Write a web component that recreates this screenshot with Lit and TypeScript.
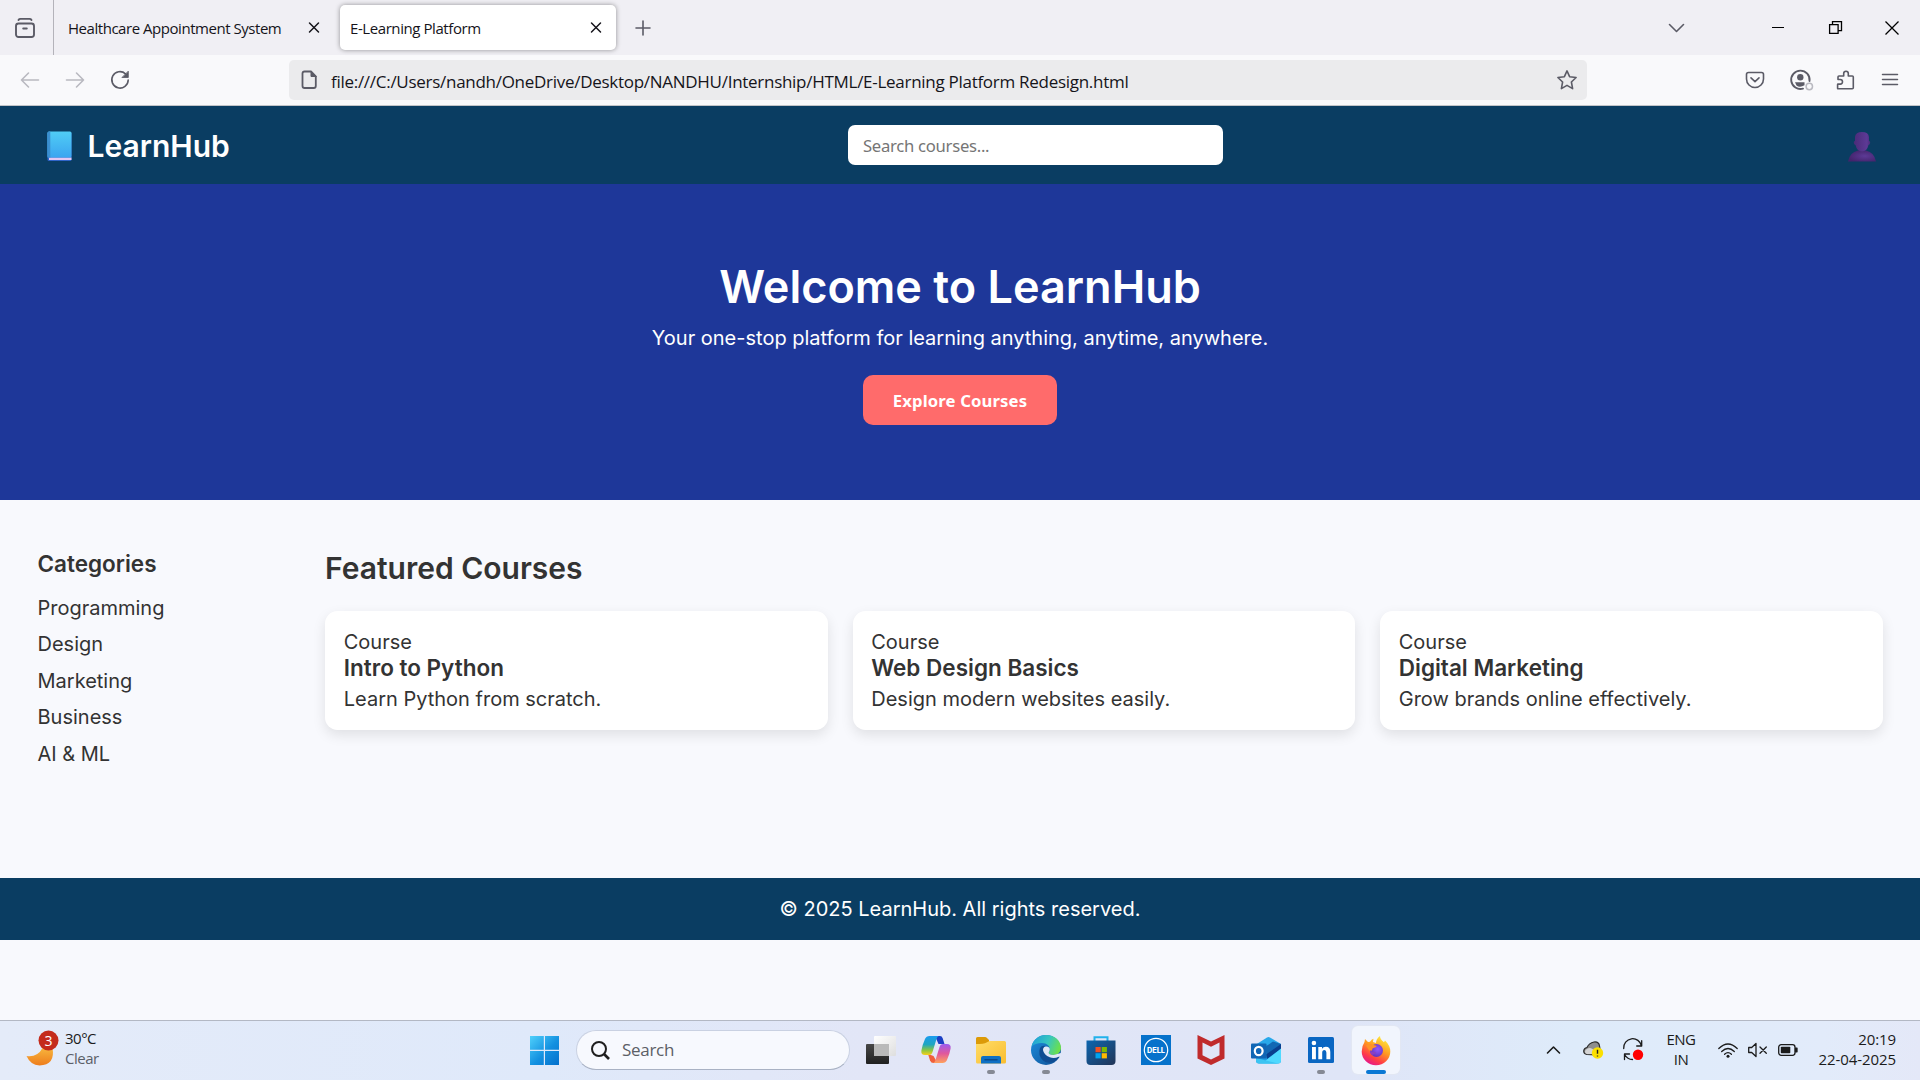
import { LitElement, html, css, svg } from "lit";
import { customElement } from "lit/decorators.js";

/* ---------- Browser chrome ---------- */
@customElement("browser-chrome")
class BrowserChrome extends LitElement {
  static styles = css`
    :host { display: block; font-family: "Open Sans", "Noto Sans", sans-serif; color: #15141a; }
    svg { display: block; fill: none; stroke: #5b5b66; stroke-width: 1.6; stroke-linecap: round; stroke-linejoin: round; flex: none; overflow: visible; }
    .tabs { height: 55px; background: #f0eff4; display: flex; align-items: center; box-sizing: border-box; }
    .view { width: 54px; height: 55px; border-right: 1px solid #b4b3ba; box-sizing: border-box; display: flex; align-items: center; padding-left: 15px; }
    .tab { display: flex; align-items: center; justify-content: space-between; box-sizing: border-box; height: 45px; font-size: 15px; white-space: nowrap; }
    .tab svg { stroke: #15141a; stroke-width: 1.5; }
    .idle { width: 285px; padding: 0 20px 0 14px; }
    .idle span { letter-spacing: -0.46px; }
    .active { width: 276px; margin-left: 1px; padding: 0 15px 0 10px; background: #fff; border-radius: 5px; box-shadow: 0 0 5px rgba(0, 0, 0, 0.4); }
    .active span { letter-spacing: -0.42px; }
    .plus { margin-left: 20px; }
    .controls { margin-left: auto; display: flex; align-items: center; padding-right: 21px; }
    .chevron { margin-right: 88px; }
    .minimize { margin-right: 45px; }
    .restore { margin-right: 43px; }
    .dark { stroke: #000; stroke-width: 1.3; stroke-linecap: butt; stroke-linejoin: miter; }
    .bar { height: 51px; background: #f9f9fb; border-bottom: 1px solid #c2c4c8; box-sizing: border-box; display: flex; align-items: center; }
    .nav { width: 289px; box-sizing: border-box; padding-left: 20px; display: flex; gap: 25px; }
    .faint { stroke: #b9b9c0; }
    .url { width: 1298px; height: 40px; border-radius: 5px; background: #ebebed; display: flex; align-items: center; box-sizing: border-box; padding: 0 10px 0 11px; }
    .address { flex: 1; margin-left: 13px; font-size: 17px; letter-spacing: -0.28px; white-space: nowrap; padding-top: 3px; }
    .tools { display: flex; align-items: center; gap: 24.500px; margin-left: 158px; }
  `;
  render() {
    const x = html`<svg width="10" height="10" viewBox="0 0 10 10"><path d="M.5 0l9 9M9.500 0l-9 9" /></svg>`;
    return html`
      <div class="tabs">
        <div class="view">
          <svg width="20" height="20" viewBox="0 0 20 20"><rect x="1" y="5.500" width="18" height="13.500" rx="2.500" stroke-width="1.900" /><path d="M3.500 1.900q.6-1 2-1h9q1.400 0 2 1M8.200 10.500h3.600" stroke-width="1.900" /></svg>
        </div>
        <div class="tab idle"><span>Healthcare Appointment System</span>${x}</div>
        <div class="tab active"><span>E-Learning Platform</span>${x}</div>
        <svg class="plus" width="14" height="14" viewBox="0 0 14 14"><path d="M7 0v14M0 7h14" /></svg>
        <div class="controls">
          <svg class="chevron" width="15" height="8" viewBox="0 0 15 8"><path d="M.5 .5l7 7 7-7" /></svg>
          <svg class="dark minimize" width="12" height="2" viewBox="0 0 12 2"><path d="M0 .5h12" stroke-width="1" /></svg>
          <svg class="dark restore" width="13" height="13" viewBox="0 0 13 13"><path d="M.6 3.600h8.500v8.800H.6zM3.500 3.500V.6h9v9H9.500" /></svg>
          <svg class="dark" width="14" height="14" viewBox="0 0 14 14"><path d="M.5 .5l13 13M13.500 .5l-13 13" /></svg>
        </div>
      </div>
      <div class="bar">
        <div class="nav">
          <svg class="faint" width="20" height="20" viewBox="0 0 20 20"><path d="M1.500 10h17M8.500 3l-7 7 7 7" /></svg>
          <svg class="faint" width="20" height="20" viewBox="0 0 20 20"><path d="M18.500 10h-17M11.500 3l7 7-7 7" /></svg>
          <svg width="20" height="20" viewBox="0 0 20 20"><path d="M15.500 3.800A8.200 8.200 0 1 0 18.200 10" /><path d="M18.300 1.500v6h-6z" fill="#5b5b66" stroke-width=".8" /></svg>
        </div>
        <div class="url">
          <svg width="18" height="20" viewBox="0 0 18 20"><path d="M4.500 1.500H11l4.800 4.800V16q0 2-2 2H4.500q-2 0-2-2V3.500q0-2 2-2z" stroke-width="1.800" /><path d="M11 1.500v5h5z" fill="#5b5b66" stroke-width="1" /></svg>
          <span class="address">file:///C:/Users/nandh/OneDrive/Desktop/NANDHU/Internship/HTML/E-Learning Platform Redesign.html</span>
          <svg width="20" height="20" viewBox="0 0 20 20"><path d="M10 .9l2.600 5.800 6.500.8-4.700 4.500 1.200 6.600L10 15.400l-5.600 3.200 1.200-6.600L.9 7.500l6.500-.8z" /></svg>
        </div>
        <div class="tools">
          <svg width="20" height="20" viewBox="0 0 20 20"><path d="M3.500 2.500h13q2 0 2 2V9a8.500 8.500 0 0 1-17 0V4.500q0-2 2-2zM6 7.800l4 3.800 4-3.800" /></svg>
          <svg width="21" height="22" viewBox="0 0 21 22"><path d="M13 19.600A9.200 9.200 0 1 1 19.500 12" stroke-width="1.900" /><circle cx="10.300" cy="8.200" r="3.200" fill="#5b5b66" stroke="none" /><path d="M5 13.200h9.500v3q-4.500 2.800-8 .3z" fill="#5b5b66" stroke="none" /><circle cx="19.300" cy="17.500" r="3.200" stroke="#b9b9c0" stroke-width="1.500" /></svg>
          <svg width="20" height="20" viewBox="0 0 20 20"><path d="M3 18.800h14.300q1 0 1-1V7q0-1-1-1h-4V3.500a2.300 2.300 0 0 0-4.600 0V6H4Q3 6 3 7v2.500h2.200a2.300 2.300 0 0 1 0 4.600H3q-.4 0-.4.400v4z" /></svg>
          <svg width="20" height="20" viewBox="0 0 20 20"><path d="M2.500 4.500h15M2.500 9.500h15M2.500 14.500h15" stroke-width="1.500" /></svg>
        </div>
      </div>
    `;
  }
}

/* ---------- Learning site ---------- */
const categories = ["Programming", "Design", "Marketing", "Business", "AI & ML"];
const courses = [
  ["Intro to Python", "Learn Python from scratch."],
  ["Web Design Basics", "Design modern websites easily."],
  ["Digital Marketing", "Grow brands online effectively."],
];

@customElement("learn-hub")
class LearnHub extends LitElement {
  static styles = css`
    :host { display: block; flex: 1; background: #f8f9fd; color: #333; font: 400 20px/24px Inter, sans-serif; }
    h1, h2, h3, h4, p, ul { margin: 0; padding: 0; font-weight: 600; }
    p { font-weight: 400; }
    ul { list-style: none; font-weight: 400; }
    header { height: 78px; box-sizing: border-box; background: #0a3d62; padding: 0 37.5px; display: flex; align-items: center; justify-content: space-between; }
    .logo { display: flex; align-items: center; color: #fff; font-size: 30px; line-height: 36px; font-weight: 600; width: 191px; white-space: nowrap; padding-top: 2px; box-sizing: border-box; }
    .logo svg { margin: 0 16px 0 9px; flex: none; }
    input { width: 375px; height: 40px; box-sizing: border-box; border: 0; border-radius: 7px; padding: 0 14px 0 15px; background: #fff; font: 16.67px "Noto Sans", sans-serif; letter-spacing: -0.28px; }
    input::placeholder { color: #757575; opacity: 1; }
    .profile { width: 40px; display: flex; justify-content: center; padding: 3px 1px 0 0; box-sizing: border-box; }
    .hero { height: 316px; box-sizing: border-box; background: #1e3799; color: #fff; padding-top: 76px; display: flex; flex-direction: column; align-items: center; }
    h1 { font-size: 45px; line-height: 54px; margin-bottom: 12px; }
    button { margin-top: 25px; width: 194px; height: 50px; padding: 1px 0 0; border: 0; border-radius: 10px; background: #ff6b6b; color: #fff; font: 700 16.67px "Noto Sans", sans-serif; letter-spacing: 0.14px; }
    main { display: grid; grid-template-columns: 250px 1fr; column-gap: 37.5px; padding: 50px 37.5px; height: 328px; box-sizing: border-box; margin-bottom: 50px; }
    h3 { font-size: 22.5px; line-height: 28px; margin-bottom: 17.75px; }
    li { margin-bottom: 12.5px; }
    h2 { font-size: 30px; line-height: 36px; margin-bottom: 25px; }
    .cards { display: grid; grid-template-columns: repeat(3, 1fr); gap: 25px; }
    .card { background: #fff; border-radius: 12.5px; padding: 18.75px; box-shadow: 0 5px 12.5px rgba(0, 0, 0, 0.1); }
    h4 { font-size: 22.5px; line-height: 28px; margin-bottom: 5.5px; }
    footer { height: 62px; background: #0a3d62; color: #fff; display: flex; align-items: center; justify-content: center; }
  `;
  render() {
    return html`
      <header>
        <div class="logo">
          <svg width="25" height="31" viewBox="0 0 25 31">
            <defs><linearGradient id="b" x1="0" y1="0" x2="0" y2="1"><stop offset="0" stop-color="#50cdf5" /><stop offset="1" stop-color="#3ba5f0" /></linearGradient></defs>
            <rect x=".5" y="1" width="24" height="29" rx="1.500" fill="#2f64c8" /><rect x="2" y="26.500" width="22.500" height="2.500" fill="#e2c7f3" />
            <rect x=".5" y=".500" width="24" height="26" rx="1.500" fill="url(#b)" /><path d="M.5 2Q.5.500 2 .5h1.300v26H.5z" fill="#3b8fd0" />
          </svg>LearnHub
        </div>
        <input placeholder="Search courses..." />
        <div class="profile">
          <svg width="28" height="30" viewBox="0 0 28 30">
            <defs>
              <linearGradient id="h" x1="0" y1="0" x2="1" y2="0"><stop offset="0" stop-color="#4a2b78" /><stop offset=".8" stop-color="#5d3a96" /><stop offset="1" stop-color="#4b2c7c" /></linearGradient>
              <radialGradient id="s" cx=".6" cy=".5" r=".6"><stop offset="0" stop-color="#5d3a96" /><stop offset="1" stop-color="#43246c" /></radialGradient>
            </defs>
            <path d="M0 29.500Q1.500 20.500 10 18.500h8q8.500 2 10 11z" fill="url(#s)" />
            <path d="M7 5q.5-5 7-5t7 5v4q1.400 0 1.200 1.800T20.500 13q-1.500 6.500-6.500 6.500T7.500 13Q6 12.600 5.800 10.800T7 9z" fill="url(#h)" />
          </svg>
        </div>
      </header>
      <section class="hero">
        <h1>Welcome to LearnHub</h1>
        <p>Your one-stop platform for learning anything, anytime, anywhere.</p>
        <button>Explore Courses</button>
      </section>
      <main>
        <aside>
          <h3>Categories</h3>
          <ul>${categories.map((c) => html`<li>${c}</li>`)}</ul>
        </aside>
        <section>
          <h2>Featured Courses</h2>
          <div class="cards">
            ${courses.map(([t, d]) => html`<div class="card"><div>Course</div><h4>${t}</h4><p>${d}</p></div>`)}
          </div>
        </section>
      </main>
      <footer>© 2025 LearnHub. All rights reserved.</footer>
    `;
  }
}

/* ---------- Desktop taskbar ---------- */
const apps = [
  { run: "", art: svg`
    <defs><linearGradient id="tv" x1="0" y1="0" x2="0" y2="1"><stop offset="0" stop-color="#474747"/><stop offset="1" stop-color="#202020"/></linearGradient><linearGradient id="tw" x1="0" y1="0" x2="1" y2="1"><stop offset="0" stop-color="#fff"/><stop offset="1" stop-color="#dedede"/></linearGradient></defs>
    <rect x="0" y="9" width="23" height="20" rx="1" fill="url(#tv)"/><rect x="8" y="1" width="22" height="20" rx="1" fill="url(#tw)"/><rect x="8" y="9" width="15" height="12" fill="#b9b9b9"/>` },
  { run: "", art: svg`
    <defs>
      <linearGradient id="ca" x1="0" y1="0" x2="0" y2="1"><stop offset="0" stop-color="#1a9bf0"/><stop offset=".45" stop-color="#1fa6c0"/><stop offset=".75" stop-color="#8cc63f"/><stop offset="1" stop-color="#f8cf1c"/></linearGradient>
      <linearGradient id="cb" x1="0" y1="0" x2="0" y2="1"><stop offset="0" stop-color="#9b5cf0"/><stop offset=".5" stop-color="#e0589c"/><stop offset="1" stop-color="#ffa15c"/></linearGradient>
    </defs>
    <path d="M14 1h5q2 0 2.700 2.300L23.500 9h-6z" fill="#1b3fc4"/><path d="M7 19l2 6.500Q10 28 12.500 28h4l-4-7z" fill="#f0603c"/>
    <path d="M8.500 1h9.200q-1.500.7-2.200 3l-4 13Q10.700 20 8 20H4Q-.3 20 .4 15.500 1.300 10 4 4 5.300 1 8.500 1z" fill="url(#ca)"/>
    <path d="M21.500 28h-9.200q1.500-.7 2.200-3l4-13Q19.300 9 22 9h4q4.300 0 3.600 4.500-.9 5.500-3.600 11.500-1.300 3-4.500 3z" fill="url(#cb)"/>` },
  { run: "open", art: svg`
    <defs><linearGradient id="fo" x1="0" y1="0" x2="1" y2="1"><stop offset="0" stop-color="#ffdc68"/><stop offset="1" stop-color="#f9bd2f"/></linearGradient></defs>
    <path d="M0 3.500Q0 2 1.500 2H9q1.200 0 2 .9L13 5v6H0z" fill="#dc9a08"/><path d="M0 9q8 0 10.500-1.500Q12.500 6 14 6h14.500Q30 6 30 7.500V27q0 1.500-1.500 1.500h-27Q0 28.500 0 27z" fill="url(#fo)"/>
    <path d="M5 28.500V23q0-2 2-2h16q2 0 2 2v5.500z" fill="#0f70c4"/><path d="M9 24.700h12" stroke="#0b4a8c" stroke-width="1.500" stroke-linecap="round"/>` },
  { run: "open", art: svg`
    <defs>
      <linearGradient id="ea" x1="0" y1=".2" x2="1" y2=".5"><stop offset="0" stop-color="#1e9fd8"/><stop offset=".55" stop-color="#37c6c0"/><stop offset="1" stop-color="#6be04c"/></linearGradient>
      <linearGradient id="eb" x1="0" y1="0" x2="1" y2="1"><stop offset="0" stop-color="#1b8fe0"/><stop offset="1" stop-color="#114f94"/></linearGradient>
    </defs>
    <circle cx="15" cy="15" r="15" fill="url(#eb)"/>
    <path d="M.6 11.500C2 4.500 8 0 15 0c9 0 15 6 15 12.800 0 4.600-3.500 7.200-7.600 7.200-3.200 0-5-1.200-4.700-2.400.3-.8 1.200-1.500 1.200-3.400 0-3-3-6.200-8-6.200-4.500 0-8.500 1.500-10.300 3.500z" fill="url(#ea)"/>
    <path d="M18.500 12.700q-3.500-2.500-6.200 0-2.300 3 0 7 3.500 5.300 10.500 4.300 3.200-.5 5.200-2 .8-.5.300.6l1.700 0V18l-7.600 2c-3.200 0-5-1.200-4.700-2.400.5-1 1.600-2.400.8-4.900z" fill="#e0e8f7"/>
    <path d="M9 13q-2.500 7 3 12.500 4.500 3.700 10.500 1.500 3.500-1.700 5.800-4.800.3-.8-.5-.5-4.500 2-9 .6-6-2.200-6.800-7.200-.2-3 2-4.200Q10.500 10.500 9 13z" fill="#104d93"/>` },
  { run: "", art: svg`
    <defs><linearGradient id="st" x1="0" y1="0" x2="1" y2="1"><stop offset="0" stop-color="#0d66b0"/><stop offset="1" stop-color="#223456"/></linearGradient></defs>
    <path d="M8.500 7V2.200h13V7" fill="none" stroke="#22b2ec" stroke-width="2"/><path d="M.5 5.500h29V26q0 4-4 4h-21q-4 0-4-4z" fill="url(#st)"/>
    <path d="M9.500 12h5.200v5.200H9.500z" fill="#f25022"/><path d="M15.700 12h5.200v5.200h-5.200z" fill="#7fba00"/><path d="M9.500 18.200h5.200v5.200H9.500z" fill="#00a4ef"/><path d="M15.700 18.200h5.200v5.200h-5.200z" fill="#ffb900"/>` },
  { run: "", art: svg`
    <rect width="30" height="30" fill="#0672cb"/><circle cx="15" cy="15" r="11.700" fill="none" stroke="#fff" stroke-width="1.200"/>
    <text x="15" y="17.600" text-anchor="middle" fill="#fff" font-family="Inter, sans-serif" font-weight="800" font-size="7.200" textLength="18" lengthAdjust="spacingAndGlyphs">DELL</text>` },
  { run: "", art: svg`<path d="M1.500 0L15 6.500 28.500 0v23.500L15 30 1.500 23.500zM6.500 7.500v12.800L15 24.500l8.500-4.200V7.500L15 11.800z" fill="#c02b2c" fill-rule="evenodd"/>` },
  { run: "", art: svg`
    <path d="M5 9.500L16 2.500q1.500-.8 3 0L30 9v6H5z" fill="#28a8ea"/><path d="M5 10h14l11 4v11.500q0 3-3 3H8q-3 0-3-3z" fill="#1e9be0"/>
    <path d="M14 12l8-5.500 8 2.500v2L16 21z" fill="#1268b4"/><path d="M15 19.500L30 9v5L16 24z" fill="#0a3f8e"/>
    <path d="M30 13.500v12q0 3-3 3H11z" fill="#50d9ff"/><path d="M5 23l22 5.500H8q-3 0-3-3z" fill="#3cc4f2"/>
    <rect x="0" y="8.500" width="15.500" height="15" rx="1" fill="#1066b5"/><ellipse cx="7.700" cy="16" rx="3.900" ry="4.200" fill="none" stroke="#fff" stroke-width="2.200"/>` },
  { run: "open", art: svg`
    <rect x="2" y="2" width="26" height="26" rx="1.500" fill="#0a66c2"/><circle cx="7.900" cy="8" r="2.300" fill="#fff"/><path d="M6 12h3.900v12.200H6zM12.300 12H16v1.700q1.200-2 3.800-2 4.500 0 4.500 5.300v7.200h-3.900v-6.500q0-2.700-2-2.700-2.200 0-2.200 2.700v6.500h-3.900z" fill="#fff"/>` },
  { run: "focus", art: svg`
    <defs>
      <linearGradient id="fa" x1=".8" y1=".1" x2=".3" y2="1"><stop offset="0" stop-color="#ffe53b"/><stop offset=".4" stop-color="#ff9a20"/><stop offset=".75" stop-color="#ff3b47"/><stop offset="1" stop-color="#e3168f"/></linearGradient>
      <radialGradient id="fb" cx=".6" cy=".4" r=".6"><stop offset="0" stop-color="#9059ff"/><stop offset="1" stop-color="#6434bd"/></radialGradient>
    </defs>
    <path d="M3.500 7l.5-3 3 3 2-.2Q11 4 12.500 3.800l-.5 3.200 3 1Q15 4 19 1q0 3.500 4 6.200l1-1.700q5.300 5 5.300 11A14.300 13.800 0 0 1 .7 16.500Q.7 11 3.500 7z" fill="url(#fa)"/>
    <circle cx="15.500" cy="15.500" r="6.500" fill="url(#fb)"/>
    <path d="M5 10.500q4-2.500 7.500-.5l3 .8q.5 1.500-3 2.200-1.700.5-1.300 2-2 2-3.700-.5z" fill="#ff9326"/><path d="M9 15q2 3 6 2.200-1 3-4.500 2.300Q8.500 18 9 15z" fill="#8b3fc0"/>` },
];

@customElement("task-bar")
class TaskBar extends LitElement {
  static styles = css`
    :host { display: flex; height: 60px; box-sizing: border-box; border-top: 1px solid #b3b8c4; background: linear-gradient(90deg, #e4ebf9, #dfe9fa 28%, #e2e6f7 45%, #dfe5f7 70%, #deebfa 82%, #e2ebfa 95%, #e4e8f8); font: 15px/20px "Open Sans", "Noto Sans", sans-serif; color: #1b1b1b; align-items: center; padding-bottom: 1px; }
    svg { display: block; flex: none; overflow: visible; }
    .weather { display: flex; width: 530px; padding: 0 0 2px 26px; box-sizing: border-box; align-items: center; gap: 6px; letter-spacing: -0.5px; }
    .weather > svg { margin-bottom: -1px; }
    .temp { margin-top: -2px; }
    .clear { color: #5b5f68; }
    .search { width: 274px; height: 40px; margin-left: 17px; border-radius: 20px; background: #f7f9fe; border: 1px solid #c9d1e2; border-bottom-color: #a9b2c4; box-sizing: border-box; display: flex; align-items: center; gap: 12px; padding-left: 14px; font-size: 17px; letter-spacing: -0.3px; color: #5c5f66; }
    .apps { display: flex; margin-left: 3px; }
    .cell { width: 55px; height: 58px; display: flex; flex-direction: column; align-items: center; justify-content: center; box-sizing: border-box; }
    .tile { width: 48px; height: 48px; border-radius: 6px; display: flex; flex-direction: column; align-items: center; padding-top: 9px; box-sizing: border-box; }
    .mark { margin-top: 5px; height: 4px; border-radius: 2px; }
    .open .mark { width: 8px; background: #858994; }
    .focus .mark { width: 20px; background: #0a78d4; }
    .focus .tile { background: #f1f5fd; box-shadow: 0 0 0 1px #e2e7f3; }
    .tray { margin-left: auto; display: flex; align-items: center; padding-right: 24px; }
    .tray > * { margin-left: var(--gap, 0); }
    .line { fill: none; stroke: #1b1b1b; stroke-width: 1.3; stroke-linecap: round; stroke-linejoin: round; }
    .cloud { --gap: 23px; }
    .sync { --gap: 20px; }
    .volume { --gap: 10px; }
    .battery { --gap: 11px; }
    .lang { --gap: 18px; width: 40px; text-align: center; letter-spacing: -0.5px; margin-right: 17px; padding-bottom: 2px; }
    .clock { --gap: 8px; width: 90px; text-align: right; letter-spacing: -0.08px; white-space: nowrap; padding-bottom: 3px; }
  `;
  render() {
    return html`
      <div class="weather">
        <svg width="33" height="36" viewBox="0 0 33 36">
          <defs><linearGradient id="m" x1="0" y1="0" x2="0" y2="1"><stop offset="0" stop-color="#f7b53d" /><stop offset="1" stop-color="#ee7d1c" /></linearGradient></defs>
          <path d="M.5 24q11 1.500 16-8l10 0q3 17-13 17.500Q4.500 33 .5 24z" fill="url(#m)" /><circle cx="22.500" cy="8.500" r="10" fill="#c42b1c" />
          <text x="22.200" y="13.500" text-anchor="middle" fill="#fff" font-size="14">3</text>
        </svg>
        <div class="temp">30°C<div class="clear">Clear</div></div>
      </div>
      <svg width="29" height="29" viewBox="0 0 29 29">
        <defs><linearGradient id="w" gradientUnits="userSpaceOnUse" x1="0" y1="0" x2="29" y2="29"><stop offset="0" stop-color="#4fd0fb" /><stop offset=".55" stop-color="#1390e0" /><stop offset="1" stop-color="#0470cc" /></linearGradient></defs>
        <path d="M0 0h13.800v13.800H0zM15 0h14v13.800H15zM0 15h13.800v14H0zM15 15h14v14H15z" fill="url(#w)" />
      </svg>
      <div class="search">
        <svg width="19" height="19" viewBox="0 0 19 19" fill="none" stroke="#1f1f1f" stroke-width="2"><circle cx="8" cy="8" r="7" /><path d="M13 13l5 5" stroke-width="2.600" /></svg>Search
      </div>
      <div class="apps">
        ${apps.map((a) => html`<div class="cell ${a.run}"><div class="tile"><svg width="30" height="30" viewBox="0 0 30 30">${a.art}</svg><div class="mark"></div></div></div>`)}
      </div>
      <div class="tray">
        <svg class="line" width="13" height="8" viewBox="0 0 13 8"><path d="M.5 7l6-6 6 6" stroke-width="1.600" /></svg>
        <svg class="cloud" width="20" height="18" viewBox="0 0 20 18"><path d="M4 13.500Q.7 13 .7 10 1 7 4 6.500 6 2 11 1q5-.5 5.500 4l1 6-5 3z" fill="#8e8e8e" stroke="#2b2b2b" stroke-width="1.200" /><path d="M2.500 9Q6 5.500 9.500 8l5 5H4Q1 12 2.500 9z" fill="#d4d4d4" /><circle cx="14.500" cy="12" r="5.700" fill="#fbe000" /><path d="M14.500 8.800v4M14.500 14.400v1.200" stroke="#222" stroke-width="1.400" /></svg>
        <svg class="line sync" width="20" height="20" viewBox="0 0 20 20"><path d="M.7 8.500A9 9 0 0 1 18.500 6M18.700.7V6h-5M1.500 19.500V14h5M1.500 14.500q3 5 8 5" /><circle cx="15" cy="14.800" r="5.200" fill="#f00" stroke="none" /></svg>
        <div class="lang">ENG<br />IN</div>
        <svg class="line" width="20" height="15" viewBox="0 0 20 15"><path d="M.8 5.500q9.200-9 18.400 0M3.700 8.500q6.300-6 12.600 0M6.600 11.200q3.400-3.200 6.800 0" /><circle cx="10" cy="13.300" r="1.500" fill="#1b1b1b" stroke="none" /></svg>
        <svg class="line volume" width="19" height="14" viewBox="0 0 19 14"><path d="M.7 4.500v5h3l4.300 4V.5l-4.300 4zM12 4l6.300 6.300M18.300 4L12 10.300" /></svg>
        <svg class="line battery" width="20" height="12" viewBox="0 0 20 12"><rect x=".7" y=".7" width="16.300" height="10.600" rx="2.500" /><rect x="2.800" y="2.800" width="9.500" height="6.400" rx=".8" fill="#1b1b1b" stroke="none" /><path d="M17.500 4.200h1.500v3.600h-1.500z" fill="#1b1b1b" /></svg>
        <div class="clock">20:19<br />22-04-2025</div>
      </div>
    `;
  }
}

@customElement("app-root")
class AppRoot extends LitElement {
  static styles = css`
    :host { display: flex; flex-direction: column; width: 1920px; height: 1080px; overflow: hidden; background: #f8f9fd; }
  `;
  render() {
    return html`<browser-chrome></browser-chrome><learn-hub></learn-hub><task-bar></task-bar>`;
  }
}
